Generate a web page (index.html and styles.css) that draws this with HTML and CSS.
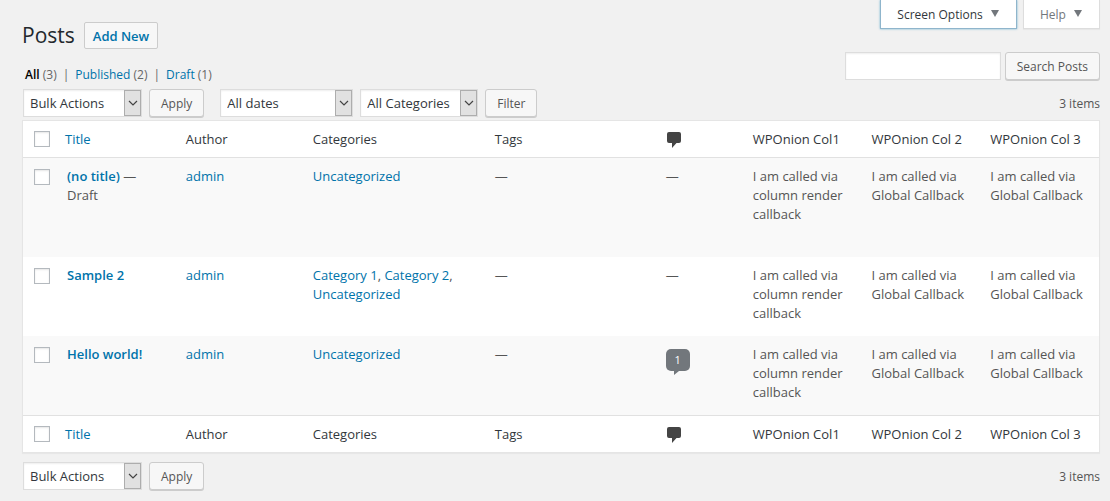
FILE: index.html
```html
<!DOCTYPE html>
<html lang="en">
<head>
  <meta charset="UTF-8">
  <meta name="viewport" content="width=device-width, initial-scale=1">
  <title>Posts</title>
  <link rel="stylesheet" href="styles.css">
</head>
<body>
  <svg class="sprite" aria-hidden="true">
    <symbol id="chevron" viewBox="0 0 10 6"><path d="M1 1l4 4 4-4" fill="none" stroke="#444" stroke-width="1.2"/></symbol>
    <symbol id="comment" viewBox="0 0 14 16"><path d="M2 0h10q2 0 2 2v7q0 2-2 2H9.500L5 16v-5H2q-2 0-2-2V2q0-2 2-2z" fill="#444"/></symbol>
    <symbol id="triangle" viewBox="0 0 8 7"><path d="M0 0h8L4 7z" fill="#72777c"/></symbol>
  </svg>

  <div class="wrap">
    <header class="top">
      <div class="top-left">
        <div class="heading">
          <h1>Posts</h1>
          <a href="#" class="page-title-action">Add New</a>
        </div>
        <ul class="subsubsub">
          <li><a href="#" class="current">All</a> (3)</li>
          <li><a href="#">Published</a> (2)</li>
          <li><a href="#">Draft</a> (1)</li>
        </ul>
      </div>
      <div class="top-right">
        <div class="screen-meta">
          <button type="button" class="meta-tab active">Screen Options <svg><use href="#triangle"/></svg></button>
          <button type="button" class="meta-tab">Help <svg><use href="#triangle"/></svg></button>
        </div>
        <form class="search-box">
          <input type="search" class="search-input" aria-label="Search Posts">
          <button type="button" class="button">Search Posts</button>
        </form>
      </div>
    </header>

    <div class="tablenav">
      <div class="actions">
        <span class="select select-bulk"><select aria-label="Bulk action"><option>Bulk Actions</option></select><span class="arrow"><svg><use href="#chevron"/></svg></span></span>
        <button type="button" class="button">Apply</button>
      </div>
      <div class="actions">
        <span class="select select-dates"><select aria-label="Filter by date"><option>All dates</option></select><span class="arrow"><svg><use href="#chevron"/></svg></span></span>
        <span class="select select-cats"><select aria-label="Filter by category"><option>All Categories</option></select><span class="arrow"><svg><use href="#chevron"/></svg></span></span>
        <button type="button" class="button">Filter</button>
      </div>
      <span class="count">3 items</span>
    </div>

    <table class="posts">
      <colgroup>
        <col class="col-cb"><col><col class="col-author"><col class="col-cats"><col class="col-tags"><col class="col-comments"><col><col><col>
      </colgroup>
      <thead>
        <tr>
          <td class="cb"><input type="checkbox" aria-label="Select all"></td>
          <th class="title"><a href="#">Title</a></th>
          <th>Author</th>
          <th>Categories</th>
          <th>Tags</th>
          <th class="comments"><svg class="comment-icon" role="img" aria-label="Comments"><use href="#comment"/></svg></th>
          <th>WPOnion Col1</th>
          <th>WPOnion Col 2</th>
          <th>WPOnion Col 3</th>
        </tr>
      </thead>
      <tbody>
        <tr class="draft">
          <td class="cb"><input type="checkbox" aria-label="Select (no title)"></td>
          <td class="title"><a href="#">(no title)</a> —<br>Draft</td>
          <td><a href="#">admin</a></td>
          <td><a href="#">Uncategorized</a></td>
          <td>—</td>
          <td class="comments">—</td>
          <td>I am called via column render callback</td>
          <td>I am called via Global Callback</td>
          <td>I am called via Global Callback</td>
        </tr>
        <tr>
          <td class="cb"><input type="checkbox" aria-label="Select Sample 2"></td>
          <td class="title"><a href="#">Sample 2</a></td>
          <td><a href="#">admin</a></td>
          <td><a href="#">Category 1</a>, <a href="#">Category 2</a>, <a href="#">Uncategorized</a></td>
          <td>—</td>
          <td class="comments">—</td>
          <td>I am called via column render callback</td>
          <td>I am called via Global Callback</td>
          <td>I am called via Global Callback</td>
        </tr>
        <tr>
          <td class="cb"><input type="checkbox" aria-label="Select Hello world!"></td>
          <td class="title"><a href="#">Hello world!</a></td>
          <td><a href="#">admin</a></td>
          <td><a href="#">Uncategorized</a></td>
          <td>—</td>
          <td class="comments"><a href="#" class="bubble">1</a></td>
          <td>I am called via column render callback</td>
          <td>I am called via Global Callback</td>
          <td>I am called via Global Callback</td>
        </tr>
      </tbody>
      <tfoot>
        <tr>
          <td class="cb"><input type="checkbox" aria-label="Select all"></td>
          <th class="title"><a href="#">Title</a></th>
          <th>Author</th>
          <th>Categories</th>
          <th>Tags</th>
          <th class="comments"><svg class="comment-icon" role="img" aria-label="Comments"><use href="#comment"/></svg></th>
          <th>WPOnion Col1</th>
          <th>WPOnion Col 2</th>
          <th>WPOnion Col 3</th>
        </tr>
      </tfoot>
    </table>

    <div class="tablenav bottom">
      <div class="actions">
        <span class="select select-bulk"><select aria-label="Bulk action"><option>Bulk Actions</option></select><span class="arrow"><svg><use href="#chevron"/></svg></span></span>
        <button type="button" class="button">Apply</button>
      </div>
      <span class="count">3 items</span>
    </div>
  </div>
</body>
</html>
```
FILE: styles.css
```css
* {
  box-sizing: border-box;
}
body {
  margin: 0;
  background: #f1f1f1;
  color: #555;
  font-family: "Open Sans", "Noto Sans", sans-serif;
  font-size: 13px;
  line-height: 19px;
}
a {
  color: #0073aa;
  text-decoration: none;
}
button, input, select {
  font-family: inherit;
  font-size: 12px;
}
.sprite {
  display: none;
}
.wrap {
  padding: 0 10px 0 22px;
}

/* heading, tabs and search */
.top {
  display: flex;
  justify-content: space-between;
}
.top-left {
  padding-top: 21px;
}
.heading {
  display: flex;
  align-items: center;
  gap: 9px;
}
h1 {
  margin: 0;
  color: #23282d;
  font-size: 21px;
  font-weight: 400;
  line-height: 28px;
}
.page-title-action {
  height: 27px;
  padding: 0 8px;
  border: 1px solid #ccc;
  border-radius: 2px;
  background: #f7f7f7;
  font-size: 13px;
  font-weight: 600;
  line-height: 26px;
}
.subsubsub {
  display: flex;
  margin: 16px 0 0;
  padding: 0 0 0 3px;
  list-style: none;
  color: #666;
  font-size: 12px;
}
.subsubsub li + li::before {
  content: "|";
  margin: 0 6px;
}
.subsubsub .current {
  color: #000;
  font-weight: 600;
}
.screen-meta {
  display: flex;
  justify-content: flex-end;
  gap: 6px;
}
.meta-tab {
  height: 29px;
  padding: 0 17px 0 16px;
  border: 1px solid #ddd;
  border-top: 0;
  background: #fff;
  color: #72777c;
  box-shadow: 0 1px 1px rgba(0,0,0,0.04);
}
.meta-tab svg {
  width: 8px;
  height: 7px;
  margin: 0 0 2px 5px;
}
.meta-tab.active {
  border-color: #8fb5cc;
  color: #32373c;
  box-shadow: 0 0 2px rgba(30,140,190,0.6);
}
.search-box {
  display: flex;
  justify-content: flex-end;
  gap: 4px;
  margin-top: 23px;
}
.search-input {
  width: 156px;
  height: 28px;
  border: 1px solid #ddd;
  background: #fff;
  box-shadow: inset 0 1px 2px rgba(0,0,0,0.07);
}
.button {
  height: 28px;
  padding: 0 11px;
  border: 1px solid #ccc;
  border-radius: 3px;
  background: #f7f7f7;
  color: #555;
  box-shadow: 0 1px 0 #ccc;
}

/* bars above and below the table */
.tablenav {
  display: flex;
  align-items: center;
  gap: 16px;
  margin: 5px 0 3px;
  padding-left: 1px;
}
.tablenav.bottom {
  margin-top: 9px;
}
.actions {
  display: flex;
  gap: 7px;
}
.count {
  margin-left: auto;
  font-size: 12px;
}
.select {
  position: relative;
  height: 28px;
}
.select select {
  width: 100%;
  height: 28px;
  padding: 0 20px 0 6px;
  border: 1px solid #ddd;
  border-radius: 0;
  background: #fff;
  color: #32373c;
  font-size: 13px;
  appearance: none;
  box-shadow: inset 0 1px 2px rgba(0,0,0,0.07);
}
.select-bulk {
  width: 119px;
}
.select-dates {
  width: 133px;
}
.select-cats {
  width: 118px;
}
.arrow {
  position: absolute;
  top: 1px;
  right: 1px;
  display: flex;
  align-items: center;
  justify-content: center;
  width: 17px;
  height: 26px;
  border: 1px solid #adadad;
  background: #e1e1e1;
  pointer-events: none;
}
.arrow svg {
  width: 10px;
  height: 6px;
}

/* posts table */
.posts {
  width: 100%;
  border: 1px solid #e5e5e5;
  border-spacing: 0;
  background: #fff;
  table-layout: fixed;
  box-shadow: 0 1px 1px rgba(0,0,0,0.04);
}
.col-cb {
  width: 34px;
}
.col-author {
  width: 127px;
}
.col-cats {
  width: 182px;
}
.col-tags {
  width: 173px;
}
.col-comments {
  width: 85px;
}
.posts th, .posts td {
  padding: 9px 4px 9px 10px;
  text-align: left;
  vertical-align: top;
}
.posts th {
  padding: 9px 0 8px 10px;
  color: #32373c;
  font-weight: 400;
}
.posts thead th, .posts thead td {
  border-bottom: 1px solid #e1e1e1;
}
.posts tfoot th, .posts tfoot td {
  border-top: 1px solid #e1e1e1;
}
.posts tbody tr {
  height: 79px;
}
.posts tbody .draft {
  height: 99px;
}
.posts tbody tr:nth-child(odd) {
  background: #f9f9f9;
}
.posts tbody .title a {
  font-weight: 600;
}
.posts th.title, .posts .comments {
  padding-left: 8px;
}
.posts .cb {
  padding: 10px 0 0 11px;
}
.posts tbody .cb {
  padding-top: 11px;
}
.posts .cb input {
  display: block;
  width: 16px;
  height: 16px;
  margin: 0;
  border: 1px solid #b4b9be;
  background: #fff;
  appearance: none;
  box-shadow: inset 0 1px 2px rgba(0,0,0,0.1);
}
.posts .cb input:checked {
  background: #0073aa;
}
.comment-icon {
  display: block;
  width: 14px;
  height: 16px;
  margin: 2px 0 0 1px;
}
.bubble {
  position: relative;
  display: block;
  width: 24px;
  height: 22px;
  margin-top: 4px;
  border-radius: 5px;
  background: #72777c;
  color: #fff;
  font-size: 11px;
  line-height: 22px;
  text-align: center;
}
.bubble::after {
  content: "";
  position: absolute;
  top: 22px;
  left: 8px;
  border-top: 4px solid #72777c;
  border-right: 5px solid transparent;
}
```
